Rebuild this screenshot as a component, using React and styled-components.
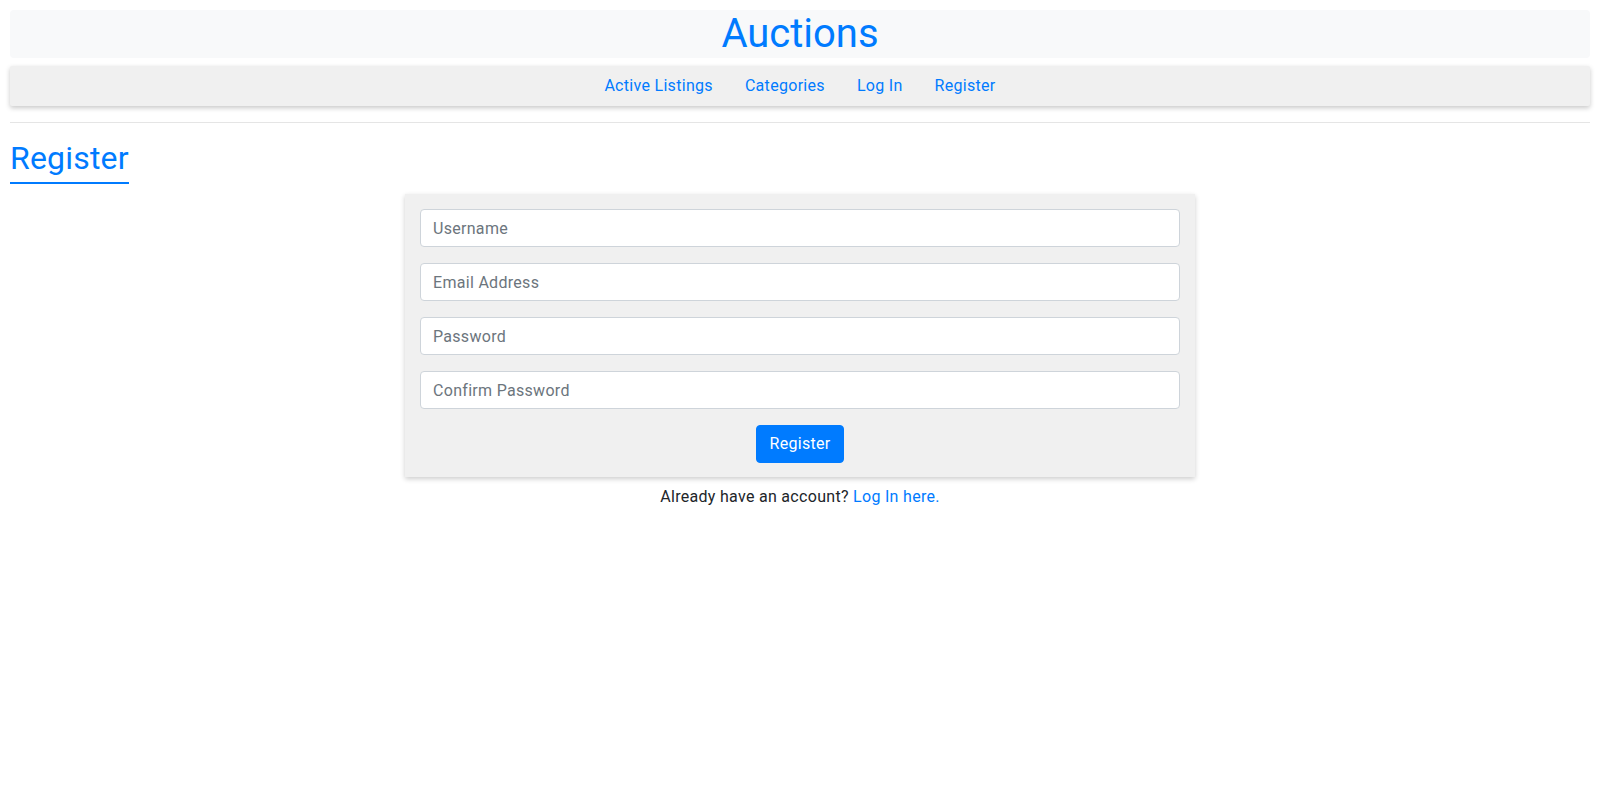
import React from "react";
import styled, { createGlobalStyle } from "styled-components";

const Global = createGlobalStyle`
  * { box-sizing: border-box; }
  body {
    margin: 0;
    padding: 10px;
    font-family: Roboto, "Liberation Sans", sans-serif;
    font-size: 16px;
    line-height: 1.5;
    letter-spacing: 0.3px;
    color: #212529;
    background: #fff;
  }
`;

const Header = styled.header`
  background: #f8f9fa;
  border-radius: 4px;
  text-align: center;
`;

const Brand = styled.h1`
  margin: 0;
  font-size: 40px;
  font-weight: 400;
  line-height: 1.2;
  letter-spacing: 0;
  color: #007bff;
`;

const NavBar = styled.nav`
  margin-top: 8px;
  background: #f0f0f0;
  border-radius: 2px;
  box-shadow: 0 2px 5px rgba(0, 0, 0, 0.22);
  display: flex;
  justify-content: center;
`;

const NavLink = styled.a`
  display: block;
  padding: 8px 16px;
  color: #007bff;
  text-decoration: none;
  line-height: 24px;
`;

const Rule = styled.hr`
  margin: 16px 0;
  border: 0;
  border-top: 1px solid rgba(0, 0, 0, 0.1);
`;

const Title = styled.h2`
  display: inline-block;
  margin: 0 0 10px;
  padding-bottom: 5px;
  font-size: 32px;
  font-weight: 400;
  line-height: 1.2;
  letter-spacing: 0.2px;
  color: #007bff;
  border-bottom: 2px solid #007bff;
`;

const Card = styled.form`
  width: 50%;
  margin: 0 auto;
  padding: 15px 15px 14px;
  background: #f0f0f0;
  box-shadow: 0 2px 5px rgba(0, 0, 0, 0.2);
  display: flex;
  flex-direction: column;
  gap: 16px;
`;

const Input = styled.input`
  display: block;
  width: 100%;
  height: 38px;
  padding: 6px 12px;
  font-family: inherit;
  font-size: 16px;
  letter-spacing: 0.3px;
  color: #495057;
  background: #fff;
  border: 1px solid #ced4da;
  border-radius: 4px;
  outline: none;
  &::placeholder { color: #6c757d; opacity: 1; }
`;

const Button = styled.button`
  align-self: center;
  height: 38px;
  padding: 6px 12px;
  font-family: inherit;
  font-size: 16px;
  line-height: 24px;
  letter-spacing: 0.3px;
  color: #fff;
  background: #007bff;
  border: 1px solid #007bff;
  border-radius: 4px;
`;

const Footnote = styled.p`
  margin: 8px 0 0;
  text-align: center;
`;

const Link = styled.a`
  color: #007bff;
  text-decoration: none;
`;

export default function App() {
  return (
    <>
      <Global />
      <Header>
        <Brand>Auctions</Brand>
      </Header>
      <NavBar>
        <NavLink href="#">Active Listings</NavLink>
        <NavLink href="#">Categories</NavLink>
        <NavLink href="#">Log In</NavLink>
        <NavLink href="#">Register</NavLink>
      </NavBar>
      <Rule />
      <Title>Register</Title>
      <Card onSubmit={(e) => e.preventDefault()}>
        <Input type="text" placeholder="Username" />
        <Input type="email" placeholder="Email Address" />
        <Input type="password" placeholder="Password" />
        <Input type="password" placeholder="Confirm Password" />
        <Button type="submit">Register</Button>
      </Card>
      <Footnote>
        Already have an account? <Link href="#">Log In here.</Link>
      </Footnote>
    </>
  );
}
